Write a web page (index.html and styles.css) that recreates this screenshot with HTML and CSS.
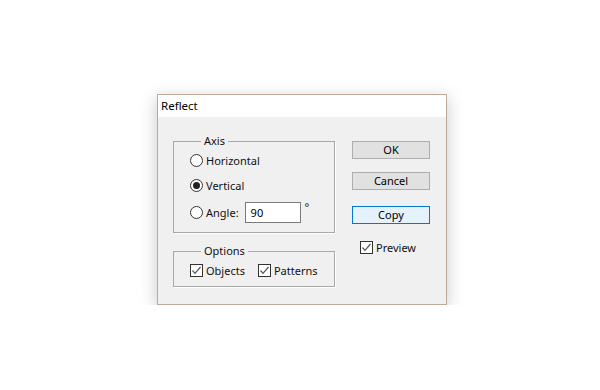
FILE: index.html
```html
<!DOCTYPE html>
<html>
<head>
<meta charset="utf-8">
<link rel="stylesheet" href="styles.css">
</head>
<body>
<div class="page">
  <div class="dialog">
    <div class="titlebar">Reflect</div>
    <div class="body">
      <div class="leftcol">
        <fieldset class="group axis">
          <legend>Axis</legend>
          <div class="row r1">
            <svg class="radio" width="13" height="13" viewBox="0 0 13 13"><circle cx="6.5" cy="6.5" r="6" fill="#fff" stroke="#333" stroke-width="1"/></svg>
            <span>Horizontal</span>
          </div>
          <div class="row r2">
            <svg class="radio" width="13" height="13" viewBox="0 0 13 13"><circle cx="6.5" cy="6.5" r="6" fill="#fff" stroke="#333" stroke-width="1"/><circle cx="6.5" cy="6.5" r="3.5" fill="#222"/></svg>
            <span>Vertical</span>
          </div>
          <div class="row r3">
            <svg class="radio" width="13" height="13" viewBox="0 0 13 13"><circle cx="6.5" cy="6.5" r="6" fill="#fff" stroke="#333" stroke-width="1"/></svg>
            <span>Angle:</span>
            <div class="input">90</div>
            <span class="deg">°</span>
          </div>
        </fieldset>
        <fieldset class="group options">
          <legend>Options</legend>
          <div class="row cbrow">
            <svg class="check" width="13" height="13" viewBox="0 0 13 13"><rect x="0.5" y="0.5" width="12" height="12" fill="#fff" stroke="#333"/><polyline points="2.5,6.5 5,9.3 10.5,3" fill="none" stroke="#555" stroke-width="1.2"/></svg>
            <span>Objects</span>
            <svg class="check gap" width="13" height="13" viewBox="0 0 13 13"><rect x="0.5" y="0.5" width="12" height="12" fill="#fff" stroke="#333"/><polyline points="2.5,6.5 5,9.3 10.5,3" fill="none" stroke="#555" stroke-width="1.2"/></svg>
            <span>Patterns</span>
          </div>
        </fieldset>
      </div>
      <div class="rightcol">
        <div class="btn ok">OK</div>
        <div class="btn cancel">Cancel</div>
        <div class="btn copy">Copy</div>
        <div class="row preview">
          <svg class="check" width="13" height="13" viewBox="0 0 13 13"><rect x="0.5" y="0.5" width="12" height="12" fill="#fff" stroke="#333"/><polyline points="2.5,6.5 5,9.3 10.5,3" fill="none" stroke="#555" stroke-width="1.2"/></svg>
          <span>Preview</span>
        </div>
      </div>
    </div>
  </div>
</div>
</body>
</html>
```
FILE: styles.css
```css
html, body {
  margin: 0;
  padding: 0;
  background: #fff;
}
body {
  font-family: "Noto Sans", "Open Sans", sans-serif;
  font-size: 11px;
  color: #111;
}
.page {
  padding: 94px 0 0 157px;
}
.dialog {
  width: 288px;
  border: 1px solid #bcab9a;
  background: #f0f0f0;
  box-shadow: 0 4px 16px rgba(0, 0, 0, 0.22);
}
.titlebar {
  height: 22px;
  line-height: 22px;
  background: #fff;
  padding-left: 3px;
  font-size: 11.5px;
  color: #000;
}
.body {
  height: 187px;
  box-sizing: border-box;
  padding: 16px 0 0 15px;
  display: flex;
}
.leftcol {
  width: 162px;
}
.group {
  margin: 0;
  padding: 0 0 0 16px;
  border: 1px solid #a8a8a8;
  box-shadow: 1px 1px 0 #fff;
  min-width: 0;
}
.group legend {
  padding: 0 3px;
  margin-left: 11px;
  line-height: 16px;
}
.axis {
  padding-top: 1px;
  padding-bottom: 9px;
}
.options {
  margin-top: 10px;
  padding-top: 3px;
  padding-bottom: 8px;
}
.row {
  display: flex;
  align-items: center;
  height: 20px;
  white-space: nowrap;
}
.r2 {
  margin-top: 5px;
}
.r3 {
  margin-top: 7px;
  height: 21px;
}
.radio, .check {
  flex: none;
  margin-right: 3px;
}
.input {
  margin-left: 6px;
  width: 49px;
  height: 19px;
  line-height: 19px;
  border: 1px solid #7a7a7a;
  background: #fff;
  padding-left: 5px;
  color: #000;
}
.deg {
  margin-left: 4px;
  align-self: flex-start;
  line-height: 10px;
}
.cbrow {
  height: 16px;
}
.check.gap {
  margin-left: 13px;
}
.rightcol {
  margin-left: 17px;
  width: 78px;
  padding-top: 8px;
}
.btn {
  box-sizing: border-box;
  width: 78px;
  height: 18px;
  line-height: 15px;
  border: 1px solid #adadad;
  background: #e1e1e1;
  text-align: center;
  color: #000;
}
.cancel {
  margin-top: 13px;
}
.copy {
  margin-top: 16px;
  border-color: #0078d7;
  background: #e5f1fb;
}
.preview {
  margin-top: 17px;
  margin-left: 8px;
  height: 13px;
}
```
